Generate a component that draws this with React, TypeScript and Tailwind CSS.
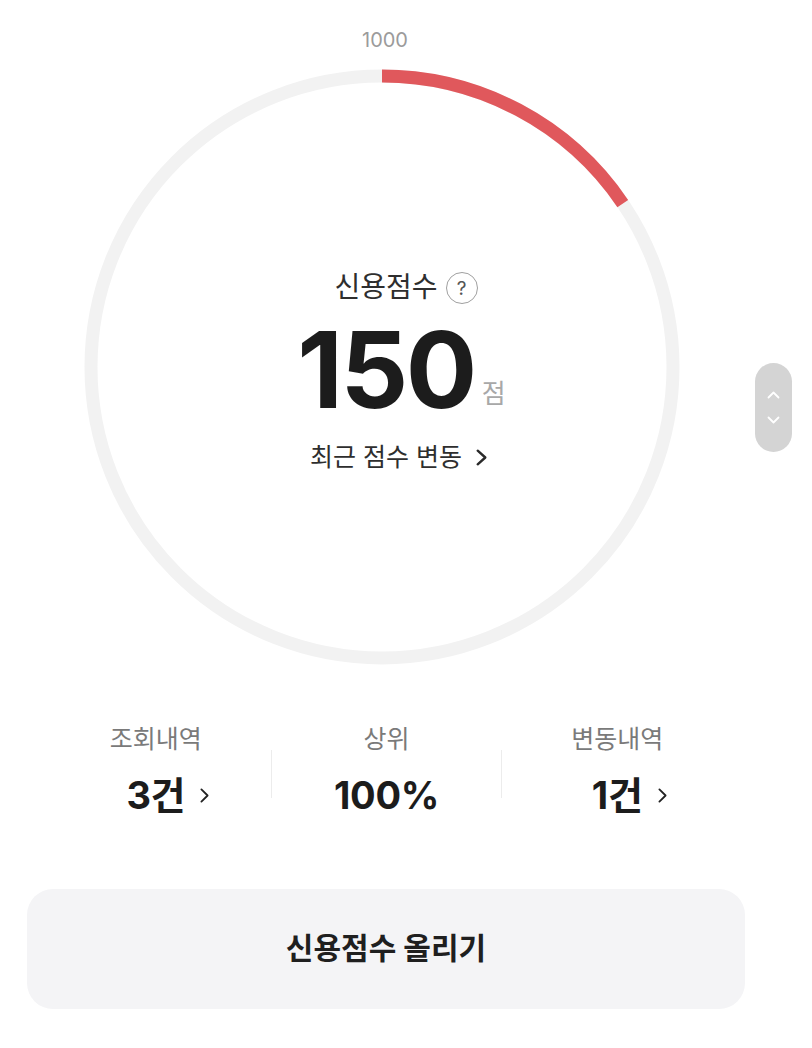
import React from "react";

const C = 2 * Math.PI * 291;

function ChevronRight({ className, w = 9, h = 15, sw = 2 }: { className?: string; w?: number; h?: number; sw?: number }) {
  return (
    <svg width={w} height={h} viewBox={`0 0 ${w} ${h}`} className={className} fill="none">
      <polyline
        points={`${sw / 2 + 0.5},${sw / 2 + 0.5} ${w - sw / 2 - 0.5},${h / 2} ${sw / 2 + 0.5},${h - sw / 2 - 0.5}`}
        stroke="currentColor"
        strokeWidth={sw}
        strokeLinecap="round"
        strokeLinejoin="round"
      />
    </svg>
  );
}

function Stat({ label, value, arrow }: { label: string; value: string; arrow?: boolean }) {
  return (
    <div className="flex-1 flex flex-col items-center">
      <div className="text-[25px] leading-[28px] text-[#7a7a7a]">{label}</div>
      <div className="mt-[21px] relative text-[38px] leading-[42px] font-bold text-[#1c1c1c] tracking-[-0.3px]">
        {value}
        {arrow && (
          <span className="absolute left-full top-0 h-full flex items-center ml-[15px]">
            <ChevronRight className="text-[#222]" w={9} h={15} sw={1.8} />
          </span>
        )}
      </div>
    </div>
  );
}

export default function App() {
  return (
    <div
      className="relative w-[812px] h-[1048px] bg-white overflow-hidden"
      style={{ fontFamily: "Inter, 'Noto Sans CJK KR', sans-serif" }}
    >
      <div className="ml-[27px] w-[718px] flex flex-col">
        <div className="h-[69px] pl-[319px] pt-[30px]">
          <div className="w-[78px] text-center text-[20px] leading-[20px] text-[#9b9b9b]">1000</div>
        </div>

        <div className="relative ml-[57px] w-[596px] h-[596px]">
          <svg className="absolute inset-0" width="596" height="596" viewBox="0 0 596 596">
            <circle cx="298" cy="298" r="291" fill="none" stroke="#f2f2f2" strokeWidth="13" />
            <circle
              cx="298"
              cy="298"
              r="291"
              fill="none"
              stroke="#e0585c"
              strokeWidth="13"
              strokeDasharray={`${C * 0.155} ${C}`}
              transform="rotate(-90 298 298)"
            />
          </svg>
          <div className="relative flex flex-col items-center pl-[8px] pt-[202px]">
            <div className="relative text-[28px] leading-[32px] text-[#2e2e2e]">
              신용점수
              <span className="absolute left-full top-[1px] ml-[8px] w-[32px] h-[32px] rounded-full border-[1.5px] border-[#a0a0a0] flex items-center justify-center text-[19px] leading-none text-[#555]">
                ?
              </span>
            </div>
            <div className="relative mt-[14px] text-[106px] leading-[106px] font-bold text-[#1c1c1c] tracking-[-2.5px]">
              150
              <span className="absolute left-full bottom-[16px] ml-[7px] text-[26px] leading-[26px] font-normal tracking-normal text-[#a8a8a8]">
                점
              </span>
            </div>
            <div className="relative mt-[19px] text-[25px] leading-[30px] text-[#2e2e2e]">
              최근 점수 변동
              <span className="absolute left-full top-0 h-full flex items-center ml-[14px]">
                <ChevronRight className="text-[#2a2a2a]" w={11} h={17} sw={2.4} />
              </span>
            </div>
          </div>
        </div>

        <div className="mt-[60px] ml-[14px] w-[691px] flex items-start">
          <Stat label="조회내역" value="3건" arrow />
          <div className="w-px h-[48px] bg-[#ececec] mt-[25px]" />
          <Stat label="상위" value="100%" />
          <div className="w-px h-[48px] bg-[#ececec] mt-[25px]" />
          <Stat label="변동내역" value="1건" arrow />
        </div>

        <button className="mt-[73px] w-[718px] h-[120px] rounded-[26px] bg-[#f4f4f6] flex items-center justify-center pb-[2px]">
          <span className="text-[30px] leading-[34px] font-bold text-[#1f1f1f]">신용점수 올리기</span>
        </button>
      </div>

      <div className="absolute left-[755px] top-[363px] w-[37px] h-[89px] rounded-full bg-[#d4d4d4] flex flex-col items-center justify-center gap-[17px]">
        <svg width="13" height="8" viewBox="0 0 13 8" fill="none">
          <polyline points="1.5,6.5 6.5,1.5 11.5,6.5" stroke="#ffffff" strokeWidth="1.8" strokeLinecap="round" strokeLinejoin="round" />
        </svg>
        <svg width="13" height="8" viewBox="0 0 13 8" fill="none">
          <polyline points="1.5,1.5 6.5,6.5 11.5,1.5" stroke="#ffffff" strokeWidth="1.8" strokeLinecap="round" strokeLinejoin="round" />
        </svg>
      </div>
    </div>
  );
}
